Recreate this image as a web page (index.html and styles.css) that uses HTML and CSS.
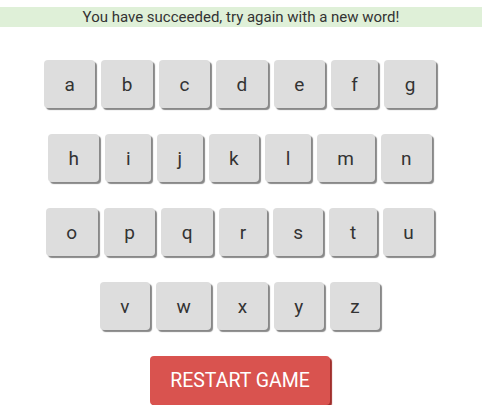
FILE: index.html
```html
<!DOCTYPE html>
<html>
<head>
<meta charset="utf-8">
<link rel="stylesheet" href="styles.css">
</head>
<body>
<div class="app">
  <div class="banner">You have succeeded, try again with a new word!</div>
  <div class="keyboard">
    <div class="row">
      <button class="key">a</button><button class="key">b</button><button class="key">c</button><button class="key">d</button><button class="key">e</button><button class="key">f</button><button class="key">g</button>
    </div>
    <div class="row">
      <button class="key">h</button><button class="key">i</button><button class="key">j</button><button class="key">k</button><button class="key">l</button><button class="key">m</button><button class="key">n</button>
    </div>
    <div class="row">
      <button class="key">o</button><button class="key">p</button><button class="key">q</button><button class="key">r</button><button class="key">s</button><button class="key">t</button><button class="key">u</button>
    </div>
    <div class="row">
      <button class="key">v</button><button class="key">w</button><button class="key">x</button><button class="key">y</button><button class="key">z</button>
    </div>
  </div>
  <div class="actions">
    <button class="restart">RESTART GAME</button>
  </div>
</div>
</body>
</html>
```
FILE: styles.css
```css
html, body {
  margin: 0;
  padding: 0;
  background: #fff;
}
body {
  font-family: Roboto, "Liberation Sans", sans-serif;
  color: #333;
}
.app {
  padding-top: 7px;
}
.banner {
  background: #dff0d8;
  color: #333;
  font-size: 15px;
  line-height: 20px;
  height: 20px;
  text-align: center;
}
.keyboard {
  width: 480px;
  display: flex;
  flex-direction: column;
  align-items: center;
  gap: 26px;
  margin-top: 33px;
}
.row {
  display: flex;
  justify-content: center;
  gap: 6px;
}
.key {
  font-family: Roboto, "Liberation Sans", sans-serif;
  font-size: 19px;
  color: #333;
  background: #dddddd;
  border: none;
  border-radius: 4px;
  box-shadow: 2px 2px 1px #888;
  height: 48px;
  padding: 0 20.5px;
  margin: 0;
}
.actions {
  width: 480px;
  display: flex;
  justify-content: center;
  margin-top: 26px;
}
.restart {
  font-family: Roboto, "Liberation Sans", sans-serif;
  font-size: 19.5px;
  color: #fff;
  background: #d9534f;
  border: none;
  border-radius: 4px;
  box-shadow: 2px 2px 1px #a02e2b;
  width: 180px;
  height: 49px;
  padding: 0;
}
```
